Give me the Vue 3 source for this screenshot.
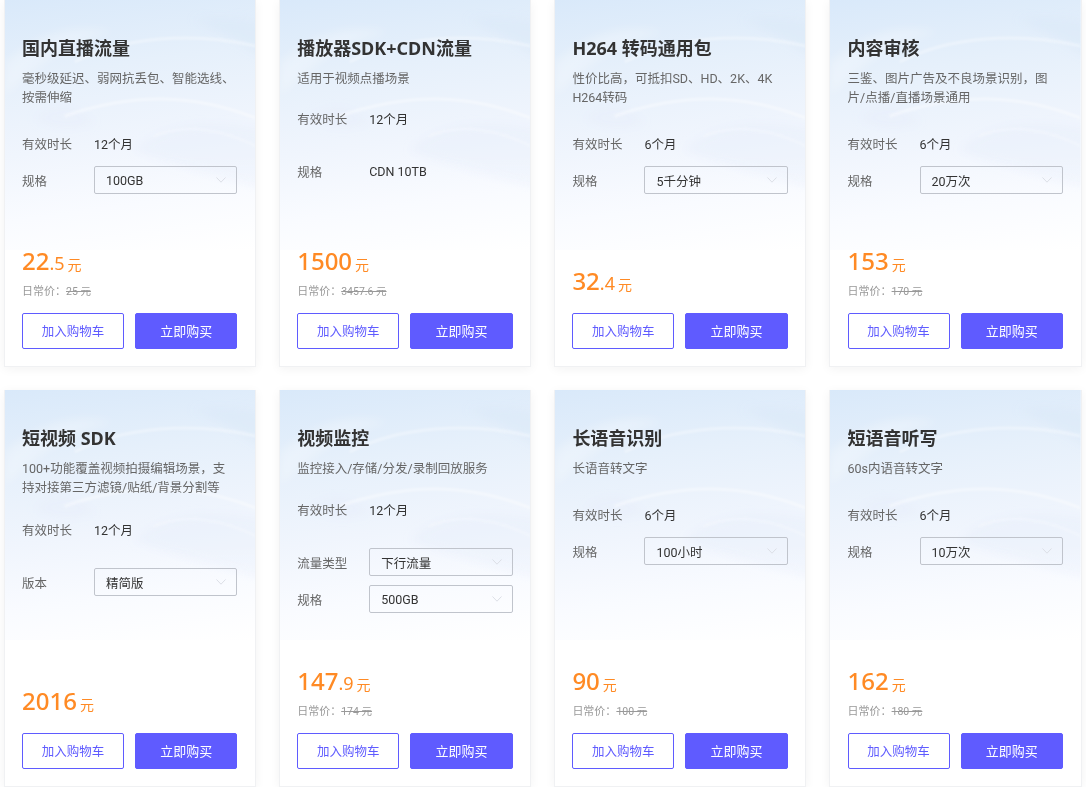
<script setup>
const cards = [
  { title: '国内直播流量', desc: '毫秒级延迟、弱网抗丢包、智能选线、按需伸缩', gap: 26, dur: '12个月', rows: [{ label: '规格', value: '100GB', select: true }], int: '22', dec: '.5', old: '25 元' },
  { title: '播放器SDK+CDN流量', desc: '适用于视频点播场景', gap: 20, dur: '12个月', rows: [{ label: '规格', value: 'CDN 10TB', tall: true }], int: '1500', dec: '', old: '3457.6 元' },
  { title: 'H264 转码通用包', desc: '性价比高，可抵扣SD、HD、2K、4K H264转码', gap: 26, dur: '6个月', rows: [{ label: '规格', value: '5千分钟', select: true }], int: '32', dec: '.4', old: '' },
  { title: '内容审核', desc: '三鉴、图片广告及不良场景识别，图片/点播/直播场景通用', gap: 26, dur: '6个月', rows: [{ label: '规格', value: '20万次', select: true }], int: '153', dec: '', old: '170 元' },
  { title: '短视频 SDK', desc: '100+功能覆盖视频拍摄编辑场景，支持对接第三方滤镜/贴纸/背景分割等', gap: 22, dur: '12个月', rows: [{ label: '版本', value: '精简版', select: true, wide: true }], int: '2016', dec: '', old: '' },
  { title: '视频监控', desc: '监控接入/存储/分发/录制回放服务', gap: 21, dur: '12个月', rows: [{ label: '流量类型', value: '下行流量', select: true, wide: true }, { label: '规格', value: '500GB', select: true }], int: '147', dec: '.9', old: '174 元' },
  { title: '长语音识别', desc: '长语音转文字', gap: 26, dur: '6个月', rows: [{ label: '规格', value: '100小时', select: true }], int: '90', dec: '', old: '100 元' },
  { title: '短语音听写', desc: '60s内语音转文字', gap: 26, dur: '6个月', rows: [{ label: '规格', value: '10万次', select: true }], int: '162', dec: '', old: '180 元' },
]
</script>

<template>
  <div class="grid">
    <article v-for="c in cards" :key="c.title" class="card">
      <svg class="clouds" viewBox="0 0 252 250" preserveAspectRatio="none" aria-hidden="true">
        <defs>
          <filter id="soft" x="-20%" y="-20%" width="140%" height="140%"><feGaussianBlur stdDeviation="5" /></filter>
          <filter id="line" x="-20%" y="-20%" width="140%" height="140%"><feGaussianBlur stdDeviation="1.2" /></filter>
          <linearGradient id="fade" x1="0" y1="0" x2="0" y2="1">
            <stop offset="0" stop-color="#fff" />
            <stop offset=".62" stop-color="#fff" />
            <stop offset=".95" stop-color="#000" />
          </linearGradient>
          <mask id="fadeMask"><rect width="252" height="250" fill="url(#fade)" /></mask>
        </defs>
        <g mask="url(#fadeMask)">
          <g filter="url(#soft)">
            <path d="M0 62C40 30 70 24 110 32C60 44 30 66 0 96Z" fill="#fff" opacity=".25" />
            <path d="M190 20C215 16 240 18 262 24V58C235 42 215 30 190 20Z" fill="#d6e7f8" opacity=".4" />
            <path d="M130 150C160 125 195 118 262 130V190C210 175 170 165 130 150Z" fill="#e2ebf8" opacity=".35" />
            <path d="M30 118C50 104 70 104 90 122C70 130 50 130 30 118Z" fill="#e4ecf8" opacity=".35" />
          </g>
          <g filter="url(#line)" fill="none" stroke="#fff">
            <path d="M70 62C120 36 190 32 252 46" stroke-width="3" opacity=".35" />
            <path d="M60 116C130 92 190 94 252 118" stroke-width="3" opacity=".4" />
            <path d="M150 136C180 124 215 128 252 146" stroke-width="2" opacity=".3" />
          </g>
        </g>
      </svg>
      <div class="body">
        <h3 class="title">{{ c.title }}</h3>
        <p class="desc">{{ c.desc }}</p>
        <div class="specs" :style="{ marginTop: c.gap + 'px' }">
          <div class="row plain"><span class="label">有效时长</span><span class="val">{{ c.dur }}</span></div>
          <div
            v-for="r in c.rows"
            :key="r.label"
            class="row"
            :class="{ tall: r.tall, wide: r.wide }"
          >
            <span class="label">{{ r.label }}</span>
            <div v-if="r.select" class="select">
              <span>{{ r.value }}</span>
              <svg class="chev" viewBox="0 0 10 6" width="10" height="6"><path d="M.5.5 5 5.2 9.5.5" fill="none" stroke="#dcdfe6" stroke-width="1" /></svg>
            </div>
            <span v-else class="val">{{ r.value }}</span>
          </div>
        </div>
        <div class="foot">
          <div class="price"><b>{{ c.int }}</b><em v-if="c.dec">{{ c.dec }}</em><i>元</i></div>
          <div v-if="c.old" class="old">日常价：<s>{{ c.old }}</s></div>
          <div class="btns">
            <button class="btn ghost">加入购物车</button>
            <button class="btn solid">立即购买</button>
          </div>
        </div>
      </div>
    </article>
  </div>
</template>

<style scoped>
.grid {
  display: grid;
  grid-template-columns: repeat(4, 252.5px);
  grid-template-rows: 367px 397px;
  column-gap: 22.7px;
  row-gap: 23px;
  padding-left: 3.5px;
  font-family: Roboto, "Noto Sans CJK SC", sans-serif;
}
.card {
  position: relative;
  box-sizing: border-box;
  border: 1px solid #f0f1f3;
  border-top: 0;
  background: linear-gradient(172deg, #d9e9fa 0%, #e6f0fb 28%, #f0f5fd 55%, #f9fbff 78%, #ffffff 100%) top / 100% 250px no-repeat, #fff;
  box-shadow: 0 2px 10px rgba(0, 0, 0, .05);
}
.clouds {
  position: absolute;
  top: 0;
  left: 0;
  width: 100%;
  height: 250px;
}
.body {
  position: relative;
  box-sizing: border-box;
  height: 100%;
  display: flex;
  flex-direction: column;
  padding: 36px 17.6px 17px 17.5px;
}
.title {
  margin: 0;
  font-family: "Noto Sans", "Noto Sans CJK SC", sans-serif;
  font-size: 18px;
  line-height: 24px;
  font-weight: 700;
  color: #333;
}
.desc {
  max-width: 214px;
  margin: 9px 0 0;
  font-size: 12.5px;
  line-height: 19px;
  color: #666;
}
.row {
  display: flex;
  align-items: center;
  height: 28px;
  margin-top: 13px;
  font-size: 12.5px;
}
.row.plain {
  margin-top: 0;
  height: 20px;
}
.row.tall { margin-top: 33px; height: 20px; }
.row.wide { margin-top: 29px; }
.row.wide + .row { margin-top: 9px; }
.label {
  flex: 0 0 72px;
  color: #666;
}
.val { color: #333; }
.select {
  flex: 1;
  box-sizing: border-box;
  height: 28px;
  display: flex;
  align-items: center;
  justify-content: space-between;
  padding: 0 10px 0 11px;
  border: 1px solid #c0c4cc;
  border-radius: 2px;
  color: #333;
}
.foot {
  margin-top: auto;
}
.price {
  font-family: "Noto Sans", "Noto Sans CJK SC", sans-serif;
  color: #ff8a24;
  line-height: 30px;
}
.price b { font-size: 24px; font-weight: 500; }
.price em { font-size: 18px; font-style: normal; }
.price i { font-size: 14px; font-style: normal; margin-left: 3px; }
.old {
  margin-top: 4px;
  font-size: 11px;
  line-height: 16px;
  color: #999;
}
.old s { font-size: 10.5px; }
.btns {
  display: flex;
  justify-content: space-between;
  margin-top: 13px;
}
.btn {
  box-sizing: border-box;
  height: 36px;
  padding: 0 0 2px;
  border-radius: 2px;
  font: inherit;
  font-size: 12.5px;
}
.ghost {
  width: 102px;
  border: 1px solid #5f5bff;
  background: #fff;
  color: #5f5bff;
}
.solid {
  width: 102.4px;
  border: 1px solid #5f5bff;
  background: #5f5bff;
  color: #fff;
  font-size: 13px;
}
</style>

<style>
html, body { background: #fff; }
</style>
